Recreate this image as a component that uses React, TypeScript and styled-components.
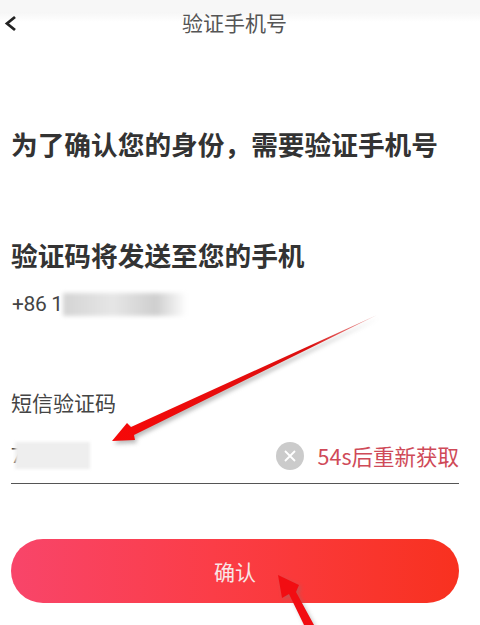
import React from "react";
import styled, { createGlobalStyle } from "styled-components";

const GlobalStyle = createGlobalStyle`
  html, body {
    margin: 0;
    padding: 0;
    background: #fff;
  }
  body {
    font-family: "Liberation Sans", "Noto Sans CJK SC", sans-serif;
    overflow: hidden;
  }
`;

const Page = styled.div`
  position: relative;
  width: 480px;
  height: 625px;
  overflow: hidden;
  background: #fff;
`;

const StatusStrip = styled.div`
  height: 12px;
  background: #f7f7f7;
`;

const NavBar = styled.div`
  position: relative;
  box-sizing: border-box;
  height: 24px;
  display: flex;
  align-items: center;
  justify-content: center;
  padding: 0 11px 4px 0;
  background: linear-gradient(#f6f6f6, #fff 10px);
`;

const BackButton = styled.div`
  position: absolute;
  left: 3px;
  top: 2px;
  width: 14px;
  height: 19px;
`;

const NavTitle = styled.div`
  font-family: "Noto Sans CJK SC", sans-serif;
  font-size: 21px;
  line-height: 24px;
  color: #555;
`;

const Content = styled.div`
  display: flex;
  flex-direction: column;
  padding: 0 21px 0 11px;
`;

const Heading = styled.h1<{ $top: number }>`
  margin: ${(p) => p.$top}px 0 0;
  font-family: "Noto Sans CJK SC", sans-serif;
  font-size: 26.7px;
  line-height: 36px;
  font-weight: 700;
  color: #333;
  white-space: nowrap;
`;

const PhoneRow = styled.div`
  display: flex;
  align-items: center;
  height: 26px;
  margin-top: 18px;
  padding-left: 1px;
  font-family: "Roboto", sans-serif;
  font-size: 21px;
  letter-spacing: -0.4px;
  color: #444;
`;

const Smudge = styled.div`
  width: 124px;
  height: 23px;
  background: linear-gradient(90deg, #d4d4d4, #e6e6e6 40%, #cfcfcf 75%, #fff);
  filter: blur(2px);
`;

const FieldLabel = styled.div`
  margin-top: 71px;
  font-family: "Noto Sans CJK SC", sans-serif;
  font-size: 21px;
  line-height: 28px;
  color: #444;
`;

const CodeRow = styled.div`
  display: flex;
  align-items: center;
  height: 55px;
  margin-top: 12px;
  border-bottom: 1.5px solid #555;
  font-family: "Roboto", sans-serif;
  font-size: 21px;
  color: #444;
`;

const CodeSmudge = styled.div`
  width: 75px;
  height: 27px;
  margin-left: -8px;
  background: #eeeeee;
  filter: blur(1.5px);
`;

const ClearButton = styled.div`
  width: 28px;
  height: 28px;
  margin-left: auto;
  margin-right: 14px;
  border-radius: 50%;
  background: #cbcbcb;
  display: flex;
  align-items: center;
  justify-content: center;
`;

const ResendText = styled.span`
  font-family: "Noto Sans CJK SC", sans-serif;
  font-size: 21.5px;
  color: #cf4a58;
  white-space: nowrap;
`;

const ConfirmButton = styled.button`
  height: 64px;
  margin-top: 55px;
  border: none;
  border-radius: 32px;
  padding: 0;
  background: linear-gradient(90deg, #f8456a, #fb3d47 45%, #f8311f);
  color: #f8e6e6;
  font-family: "Noto Sans CJK SC", sans-serif;
  font-size: 21px;
`;

const ArrowLayer = styled.svg`
  position: absolute;
  left: 0;
  top: 0;
  pointer-events: none;
`;

export default function App(): React.ReactElement {
  return (
    <Page>
      <GlobalStyle />
      <StatusStrip />
      <NavBar>
        <BackButton>
          <svg width="14" height="19" viewBox="0 0 14 19">
            <path d="M12 3 L4 9.5 L12 16" fill="none" stroke="#222" strokeWidth="2.8" />
          </svg>
        </BackButton>
        <NavTitle>验证手机号</NavTitle>
      </NavBar>
      <Content>
        <Heading $top={90}>为了确认您的身份，需要验证手机号</Heading>
        <Heading $top={75}>验证码将发送至您的手机</Heading>
        <PhoneRow>
          +86 1
          <Smudge />
        </PhoneRow>
        <FieldLabel>短信验证码</FieldLabel>
        <CodeRow>
          <span>7</span>
          <CodeSmudge />
          <ClearButton>
            <svg width="14" height="14" viewBox="0 0 14 14">
              <path d="M2 2 L12 12 M12 2 L2 12" stroke="#fff" strokeWidth="1.8" />
            </svg>
          </ClearButton>
          <ResendText>54s后重新获取</ResendText>
        </CodeRow>
        <ConfirmButton>确认</ConfirmButton>
      </Content>
      <ArrowLayer width="480" height="625" viewBox="0 0 480 625">
        <defs>
          <filter id="arrowShadow" x="-20%" y="-20%" width="140%" height="140%">
            <feGaussianBlur stdDeviation="2" />
          </filter>
          <linearGradient id="arrowFill" x1="112" y1="441" x2="377" y2="315" gradientUnits="userSpaceOnUse">
            <stop offset="0" stopColor="#f60808" />
            <stop offset="0.75" stopColor="#dc1010" />
            <stop offset="1" stopColor="#eab0b0" />
          </linearGradient>
        </defs>
        <path
          d="M112 441 L127 423 L131 427 L377 315 L134 435 L135 440 Z"
          transform="translate(2 3)"
          fill="#777"
          opacity="0.5"
          filter="url(#arrowShadow)"
        />
        <path d="M112 441 L127 423 L131 427 L377 315 L134 435 L135 440 Z" fill="url(#arrowFill)" />
        <path
          d="M278 575 L282 598 L289 594 L304 625 L314 625 L296 592 L299 585 Z"
          transform="translate(2 2)"
          fill="#777"
          opacity="0.4"
          filter="url(#arrowShadow)"
        />
        <path d="M278 575 L282 598 L289 594 L304 625 L314 625 L296 592 L299 585 Z" fill="#f20d12" />
      </ArrowLayer>
    </Page>
  );
}
